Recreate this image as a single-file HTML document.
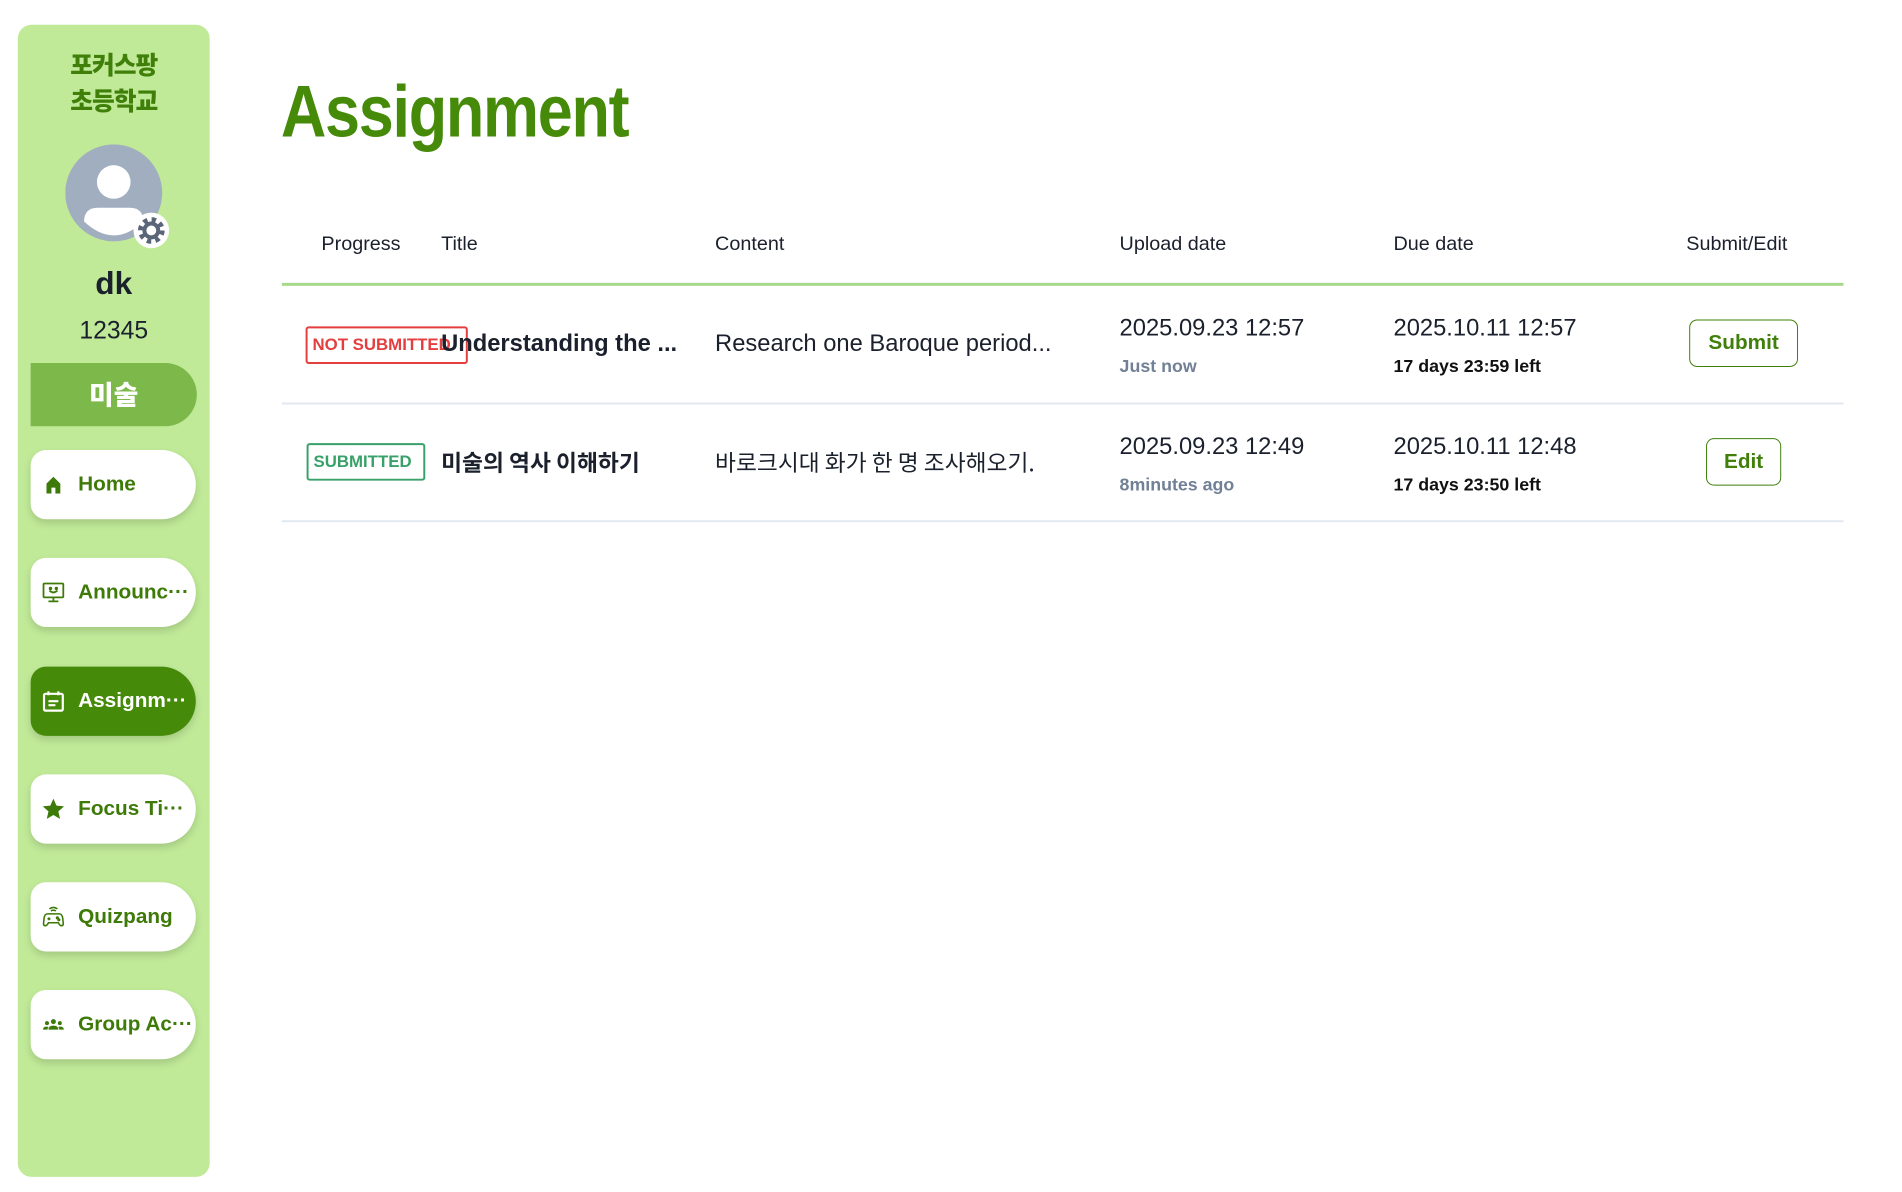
<!DOCTYPE html>
<html><head><meta charset="utf-8"><style>
*{margin:0;padding:0;box-sizing:border-box}
body{width:1902px;height:1192px;background:#fff;font-family:"Liberation Sans","Noto Sans CJK KR",sans-serif;position:relative;overflow:hidden;color:#1a202c}
#wrap{position:absolute;left:0;top:2px;width:1902px;height:1192px;transform:scale(0.989);transform-origin:0 0}
.a{position:absolute;white-space:nowrap}
#side{position:absolute;left:18px;top:23px;width:194px;height:1165px;background:#c0ea98;border-radius:14px}
.school{left:0;width:194px;text-align:center;color:#3f7f0a;font-weight:900;font-size:25px;font-family:"Noto Sans CJK KR",sans-serif;letter-spacing:-1px}
.nav{position:absolute;left:13px;width:167px;height:70px;background:#fff;border-radius:16px 36px 36px 16px;box-shadow:0 4px 8px rgba(0,0,0,.15);color:#3d7a08;font-weight:bold;font-size:21px;display:flex;align-items:center;padding-left:11px}
.nav svg{width:24px;height:24px;margin-right:13px;flex:none}
.nav.act{background:#468a0a;color:#fff}
.th{top:234px;font-size:20px;color:#1a202c}
.td{font-size:24px}
.sm{font-size:18px;font-weight:bold}
.badge{position:absolute;font-size:17px;font-weight:bold;border:2px solid;border-radius:3px;display:flex;align-items:center;padding-left:5px;overflow:visible;white-space:nowrap}
.btn{position:absolute;border:1.5px solid #3f7f0a;border-radius:8px;color:#3f7f0a;font-weight:bold;font-size:21px;display:flex;align-items:center;justify-content:center}
</style></head><body><div id="wrap">
<div id="side">
  <div class="a school" style="top:22px">포커스팡</div>
  <div class="a school" style="top:58px">초등학교</div>
  <svg class="a" style="left:48px;top:121px" width="110" height="110" viewBox="0 0 110 110">
    <circle cx="49" cy="49" r="49" fill="#a0aec0"/>
    <circle cx="49" cy="38" r="17" fill="#fff"/>
    <path d="M19 78 Q19 64 33 64 L65 64 Q79 64 79 78 Q64 92 49 92 Q34 92 19 78Z" fill="#fff"/>
    <circle cx="87" cy="87" r="18" fill="#fff"/>
    <circle cx="87" cy="87" r="10" fill="none" stroke="#5a6578" stroke-width="7" stroke-dasharray="4 3.85"/>
    <circle cx="87" cy="87" r="7" fill="none" stroke="#5a6578" stroke-width="4"/>
  </svg>
  <div class="a" style="left:0;width:194px;text-align:center;top:243px;font-size:32px;font-weight:bold;color:#1a202c">dk</div>
  <div class="a" style="left:0;width:194px;text-align:center;top:295px;font-size:25px;color:#1a202c">12345</div>
  <div class="a" style="left:13px;top:342px;width:168px;height:64px;background:#7cb84a;border-radius:0 34px 34px 0;color:#fff;font-weight:900;font-size:27px;text-align:center;line-height:62px;font-family:'Noto Sans CJK KR',sans-serif">미술</div>
  <div class="nav" style="top:430px"><svg viewBox="0 0 24 24"><path d="M5 21V11L12 4L19 11V21H14V15H10V21Z" fill="#3d7a08"/></svg>Home</div>
  <div class="nav" style="top:539px"><svg viewBox="0 0 24 24" fill="none" stroke="#3d7a08" stroke-width="1.8"><rect x="2" y="3" width="20" height="14" rx="1"/><path d="M12 17v4M7 21h10M8 10q4 4 8 0"/><circle cx="9" cy="8" r=".8" fill="#3d7a08"/><circle cx="15" cy="8" r=".8" fill="#3d7a08"/></svg>Announc···</div>
  <div class="nav act" style="top:649px"><svg viewBox="0 0 24 24" fill="none" stroke="#fff" stroke-width="2.2"><rect x="2.5" y="4.5" width="19" height="17" rx="1.5"/><path d="M7 2v4M17 2v4M7 12h10M7 16h7"/></svg>Assignm···</div>
  <div class="nav" style="top:758px"><svg viewBox="0 0 24 24"><path d="M12 1.5l3.1 7.1 7.7.7-5.8 5.1 1.7 7.6L12 18l-6.7 4 1.7-7.6L1.2 9.3l7.7-.7Z" fill="#3d7a08"/></svg>Focus Ti···</div>
  <div class="nav" style="top:867px"><svg viewBox="0 0 24 24" fill="none" stroke="#3d7a08" stroke-width="1.6"><path d="M8 4q4-3 8 0M9.5 6q2.5-1.5 5 0"/><path d="M6 9h12q3 0 3.5 5l.5 5q0 2-2 2-1.5 0-3-3H7q-1.5 3-3 3-2 0-2-2l.5-5Q3 9 6 9Z"/><path d="M6 14h3M7.5 12.5v3"/><circle cx="16" cy="13" r=".8" fill="#3d7a08"/><circle cx="17.5" cy="15" r=".8" fill="#3d7a08"/></svg>Quizpang</div>
  <div class="nav" style="top:976px"><svg viewBox="0 0 24 24" fill="#3d7a08"><circle cx="12" cy="9" r="2.5"/><circle cx="5.5" cy="10.5" r="2"/><circle cx="18.5" cy="10.5" r="2"/><path d="M7 17q0-4 5-4t5 4Z M1.5 17q0-3 3.5-3 1.5 0 2 .5-1 1-1 2.5Z M22.5 17q0-3-3.5-3-1.5 0-2 .5 1 1 1 2.5Z"/></svg>Group Ac···</div>
</div>

<div class="a" style="left:284px;top:68px;font-size:74px;font-weight:bold;color:#468a0a;letter-spacing:-1.5px;transform:scaleX(0.86);transform-origin:0 0">Assignment</div>

<div class="a th" style="left:325px">Progress</div>
<div class="a th" style="left:446px">Title</div>
<div class="a th" style="left:723px">Content</div>
<div class="a th" style="left:1132px">Upload date</div>
<div class="a th" style="left:1409px">Due date</div>
<div class="a th" style="left:1705px">Submit/Edit</div>
<div class="a" style="left:285px;top:284px;width:1579px;height:3px;background:#a6d98a"></div>

<div class="badge" style="left:309px;top:328px;width:164px;height:38px;color:#e53e3e;border-color:#e53e3e">NOT SUBMITTED</div>
<div class="a td" style="left:446px;top:332px;font-weight:bold">Understanding the ...</div>
<div class="a td" style="left:723px;top:332px">Research one Baroque period...</div>
<div class="a td" style="left:1132px;top:316px">2025.09.23 12:57</div>
<div class="a sm" style="left:1132px;top:358px;color:#718096">Just now</div>
<div class="a td" style="left:1409px;top:316px">2025.10.11 12:57</div>
<div class="a sm" style="left:1409px;top:358px;color:#111">17 days 23:59 left</div>
<div class="btn" style="left:1708px;top:321px;width:110px;height:48px">Submit</div>
<div class="a" style="left:285px;top:405px;width:1579px;height:1.5px;background:#e2e8f0"></div>

<div class="badge" style="left:310px;top:446px;width:120px;height:38px;color:#38a169;border-color:#38a169">SUBMITTED</div>
<div class="a td" style="left:446px;top:447px;font-weight:bold;font-family:'Noto Sans CJK KR',sans-serif;font-size:23px">미술의 역사 이해하기</div>
<div class="a td" style="left:723px;top:447px;font-family:'Noto Sans CJK KR',sans-serif;font-size:23px">바로크시대 화가 한 명 조사해오기.</div>
<div class="a td" style="left:1132px;top:436px">2025.09.23 12:49</div>
<div class="a sm" style="left:1132px;top:478px;color:#718096">8minutes ago</div>
<div class="a td" style="left:1409px;top:436px">2025.10.11 12:48</div>
<div class="a sm" style="left:1409px;top:478px;color:#111">17 days 23:50 left</div>
<div class="btn" style="left:1725px;top:441px;width:76px;height:48px">Edit</div>
<div class="a" style="left:285px;top:524px;width:1579px;height:1.5px;background:#e2e8f0"></div>
</div></body></html>
